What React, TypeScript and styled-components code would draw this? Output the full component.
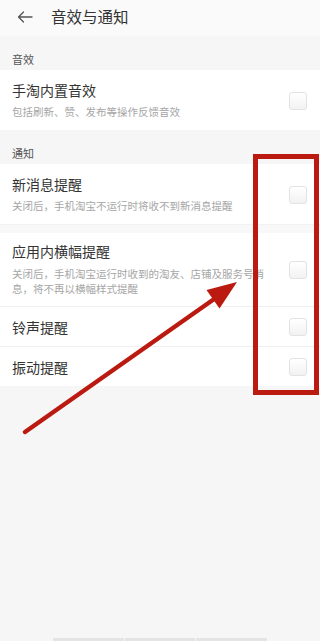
import React from 'react';
import styled, { createGlobalStyle } from 'styled-components';

const GlobalStyle = createGlobalStyle`
  html, body {
    margin: 0;
    padding: 0;
    background: #f6f6f6;
  }
  * {
    box-sizing: border-box;
  }
`;

type Item = { title: string; sub?: string; wide?: boolean };

const sections: { label: string; items: Item[] }[] = [
  {
    label: '音效',
    items: [{ title: '手淘内置音效', sub: '包括刷新、赞、发布等操作反馈音效' }],
  },
  {
    label: '通知',
    items: [
      { title: '新消息提醒', sub: '关闭后，手机淘宝不运行时将收不到新消息提醒' },
      {
        title: '应用内横幅提醒',
        sub: '关闭后，手机淘宝运行时收到的淘友、店铺及服务号消息，将不再以横幅样式提醒',
        wide: true,
      },
      { title: '铃声提醒' },
      { title: '振动提醒' },
    ],
  },
];

export default function App() {
  return (
    <>
      <GlobalStyle />
      <Page>
        <Header>
          <BackButton aria-label='返回'>
            <svg width='16' height='12' viewBox='0 0 16 12' fill='none'>
              <path
                d='M15 6H1.5M6.5 1L1.5 6l5 5'
                stroke='#555'
                strokeWidth='1.3'
                strokeLinecap='round'
                strokeLinejoin='round'
              />
            </svg>
          </BackButton>
          <Title>音效与通知</Title>
        </Header>

        {sections.map((section) => (
          <Section key={section.label}>
            <SectionLabel>{section.label}</SectionLabel>
            <Card>
              {section.items.map((item, i) => (
                <React.Fragment key={item.title}>
                  {i > 0 && <Separator $band={item.wide} />}
                  <Row $tall={!!item.sub} $wide={item.wide}>
                    <RowText>
                      <RowTitle>{item.title}</RowTitle>
                      {item.sub && <RowSub $wide={item.wide}>{item.sub}</RowSub>}
                    </RowText>
                    <CheckBox />
                  </Row>
                </React.Fragment>
              ))}
            </Card>
          </Section>
        ))}

        <NavBar>
          <NavSegment />
          <NavSegment />
          <NavSegment />
        </NavBar>

        {/* red markup drawn over the screenshot */}
        <Annotation width='320' height='641' viewBox='0 0 320 641'>
          <rect
            x='255.5'
            y='156.5'
            width='61'
            height='236'
            fill='none'
            stroke='#bb1a10'
            strokeWidth='5'
          />
          <line
            x1='25'
            y1='432'
            x2='217'
            y2='297'
            stroke='#bb1a10'
            strokeWidth='4.5'
            strokeLinecap='round'
          />
          <polygon points='237,282 206.5,290 219.5,308.5' fill='#bb1a10' />
        </Annotation>
      </Page>
    </>
  );
}

const Page = styled.div`
  position: relative;
  width: 320px;
  min-height: 641px;
  display: flex;
  flex-direction: column;
  background: #f6f6f6;
  font-family: 'Noto Sans CJK SC', 'Noto Sans', sans-serif;
  overflow: hidden;
`;

const Header = styled.div`
  height: 36px;
  display: flex;
  align-items: center;
  padding-left: 17px;
  background: #fafafa;
`;

const BackButton = styled.button`
  width: 16px;
  height: 12px;
  padding: 0;
  border: none;
  background: transparent;
  display: flex;
  margin-right: 18px;
  margin-top: -3px;
`;

const Title = styled.div`
  font-size: 15.5px;
  color: #333;
  line-height: 20px;
  margin-top: -4px;
`;

const Section = styled.div`
  display: flex;
  flex-direction: column;
`;

const SectionLabel = styled.div`
  padding: 16px 12px 4px;
  font-size: 11px;
  line-height: 14px;
  color: #555;
`;

const Card = styled.div`
  background: #fff;
  display: flex;
  flex-direction: column;
`;

const Separator = styled.div<{ $band?: boolean }>`
  height: ${(p) => (p.$band ? '9px' : '1px')};
  background: ${(p) => (p.$band ? '#f8f8f8' : '#f0f0f0')};
  border-top: ${(p) => (p.$band ? '1px solid #f2f2f2' : 'none')};
`;

const Row = styled.div<{ $tall: boolean; $wide?: boolean }>`
  display: flex;
  align-items: center;
  justify-content: space-between;
  padding: ${(p) => (p.$wide ? '10px 13px 10px 12px' : p.$tall ? '12px 13px 11px 12px' : '0 13px 0 12px')};
  min-height: ${(p) => (p.$tall ? '59px' : '39px')};
`;

const RowText = styled.div`
  display: flex;
  flex-direction: column;
  gap: 7px;
`;

const RowTitle = styled.div`
  font-size: 14px;
  line-height: 16px;
  color: #333;
`;

const RowSub = styled.div<{ $wide?: boolean }>`
  font-size: 10.5px;
  line-height: ${(p) => (p.$wide ? '15px' : '14px')};
  color: #a6a6a6;
  max-width: 256px;
`;

const CheckBox = styled.div`
  flex: none;
  width: 18px;
  height: 18px;
  border: 1px solid #e3e3e3;
  border-radius: 3px;
  background: linear-gradient(#ffffff, #f2f2f2);
`;

const NavBar = styled.div`
  margin-top: auto;
  display: flex;
  justify-content: center;
  gap: 1px;
  height: 3px;
`;

const NavSegment = styled.div`
  width: 70.5px;
  background: #e4e4e4;
`;

const Annotation = styled.svg`
  position: absolute;
  left: 0;
  top: 0;
  pointer-events: none;
`;
